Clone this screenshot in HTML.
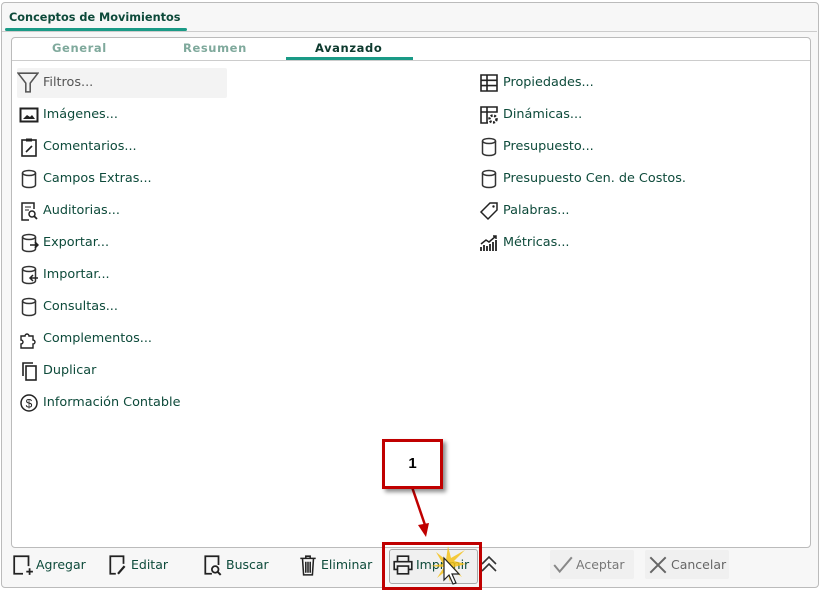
<!DOCTYPE html><html><head><meta charset="utf-8"><style>
body{margin:0;width:820px;height:589px;background:#fff;font-family:"DejaVu Sans","Liberation Sans",sans-serif;position:relative;overflow:hidden}
.outer{position:absolute;left:1px;top:2px;width:816px;height:584px;border:1px solid #bbb;border-radius:4px;background:#f7f7f7}
.title{position:absolute;left:9px;top:11px;font-size:11.3px;font-weight:bold;color:#0d4a3a}
.tline{position:absolute;left:5px;top:28px;width:182px;height:3px;background:#1a9a86;border-radius:2px}
.hline{position:absolute;left:2px;top:31px;width:815px;height:1px;background:#ccc}
.panel{position:absolute;left:11px;top:37px;width:798px;height:509px;border:1px solid #bbb;border-radius:4px;background:#fff}
.tabs{position:absolute;left:12px;top:38px;width:798px;height:22px;border-bottom:1px solid #ccc}
.tab{position:absolute;top:3px;font-size:11.5px;font-weight:bold;letter-spacing:.6px;color:#7fa99c}
.tul{position:absolute;left:286px;top:57px;width:127px;height:3px;background:#1a9a86}
.it{position:absolute;font-size:12.8px;color:#0d4a3a;height:20px;line-height:20px}
.it svg{position:absolute;left:-24px;top:0}
.btn{position:absolute;top:553px;font-size:12.5px;color:#0d4a3a;height:24px;line-height:24px}
.btn svg{position:absolute;left:-24px;top:1px}
</style></head><body>
<div class="outer"></div>
<div class="title">Conceptos de Movimientos</div>
<div class="tline"></div><div class="hline"></div>
<div class="panel"></div>
<div class="tabs"></div>
<div class="tab" style="left:52px;top:41px">General</div>
<div class="tab" style="left:183px;top:41px">Resumen</div>
<div class="tab" style="left:315px;top:41px;color:#0d3a2e">Avanzado</div>
<div class="tul"></div>
<div style="position:absolute;left:17px;top:68px;width:210px;height:30px;background:#f3f3f3;border-radius:2px"></div>
<svg width="0" height="0" style="position:absolute"><defs>
<symbol id="cyl" viewBox="0 0 20 20"><ellipse cx="10" cy="4" rx="6.5" ry="2.5" fill="none" stroke="#333" stroke-width="1.5"/><path d="M3.5 4v12c0 1.4 2.9 2.5 6.5 2.5s6.5-1.1 6.5-2.5V4" fill="none" stroke="#333" stroke-width="1.5"/></symbol>
</defs></svg>
<div class="it" style="left:43px;top:73px;color:#555"><svg width="22" height="22" viewBox="0 0 20 20" style="left:-26px;top:-2px"><path d="M1 2h18l-7 9v8h-4v-8z" fill="none" stroke="#555" stroke-width="1.4"/></svg>Filtros...</div>
<div class="it" style="left:43px;top:105px"><svg width="20" height="20" viewBox="0 0 20 20"><rect x="1.5" y="3.5" width="17" height="13" fill="none" stroke="#222" stroke-width="2"/><path d="M4 14l4-4 3 2 2-2 3 4z" fill="#222"/></svg>Imágenes...</div>
<div class="it" style="left:43px;top:137px"><svg width="20" height="20" viewBox="0 0 20 20"><rect x="3" y="3" width="14" height="16" fill="none" stroke="#222" stroke-width="1.6"/><rect x="7" y="1.5" width="6" height="3" fill="#222"/><path d="M7 15l6-6" stroke="#222" stroke-width="1.6"/></svg>Comentarios...</div>
<div class="it" style="left:43px;top:169px"><svg width="20" height="20"><use href="#cyl"/></svg>Campos Extras...</div>
<div class="it" style="left:43px;top:201px"><svg width="20" height="20" viewBox="0 0 20 20"><path d="M15 8V2H3v17h7" fill="none" stroke="#222" stroke-width="1.5"/><path d="M6 6h6M6 9h4" stroke="#222"/><circle cx="13" cy="13" r="3" fill="none" stroke="#222" stroke-width="1.5"/><path d="M15 15l3 3" stroke="#222" stroke-width="1.8"/></svg>Auditorias...</div>
<div class="it" style="left:43px;top:233px"><svg width="20" height="20"><use href="#cyl"/><path d="M11 12h8M16 9l3 3-3 3" fill="none" stroke="#222" stroke-width="1.5"/></svg>Exportar...</div>
<div class="it" style="left:43px;top:265px"><svg width="20" height="20"><use href="#cyl"/><path d="M19 13h-8M14 10l-3 3 3 3" fill="none" stroke="#222" stroke-width="1.5"/></svg>Importar...</div>
<div class="it" style="left:43px;top:297px"><svg width="20" height="20"><use href="#cyl"/></svg>Consultas...</div>
<div class="it" style="left:43px;top:329px"><svg width="20" height="20" viewBox="0 0 20 20"><path d="M2 7h4a2 2 0 1 1 4 0h4v4a2 2 0 1 1 0 4v4H2v-4a2 2 0 1 0 0-4z" fill="none" stroke="#222" stroke-width="1.4"/></svg>Complementos...</div>
<div class="it" style="left:43px;top:361px"><svg width="20" height="20" viewBox="0 0 20 20"><path d="M4 15V2h10" fill="none" stroke="#222" stroke-width="1.6"/><rect x="7" y="5" width="10" height="14" fill="none" stroke="#222" stroke-width="1.6"/></svg>Duplicar</div>
<div class="it" style="left:43px;top:393px"><svg width="20" height="20" viewBox="0 0 20 20"><circle cx="10" cy="10" r="8" fill="none" stroke="#222" stroke-width="1.5"/><text x="10" y="14.5" font-size="12" text-anchor="middle" fill="#222" font-family="Liberation Sans">$</text></svg>Información Contable</div>
<div class="it" style="left:503px;top:73px"><svg width="20" height="20" viewBox="0 0 20 20"><path d="M2 2h16v16H2zM2 7.3h16M2 12.6h16M8 2v16" fill="none" stroke="#222" stroke-width="1.6"/></svg>Propiedades...</div>
<div class="it" style="left:503px;top:105px"><svg width="20" height="20" viewBox="0 0 20 20"><path d="M2 2h16v5H2zM2 7v11h7M8 2v16" fill="none" stroke="#222" stroke-width="1.6"/><circle cx="14" cy="14" r="3.5" fill="none" stroke="#222" stroke-width="2.5" stroke-dasharray="2 1.5"/></svg>Dinámicas...</div>
<div class="it" style="left:503px;top:137px"><svg width="20" height="20"><use href="#cyl"/></svg>Presupuesto...</div>
<div class="it" style="left:503px;top:169px"><svg width="20" height="20"><use href="#cyl"/></svg>Presupuesto Cen. de Costos.</div>
<div class="it" style="left:503px;top:201px"><svg width="20" height="20" viewBox="0 0 20 20"><path d="M11 2h7v7l-9 9-7-7z" fill="none" stroke="#222" stroke-width="1.5"/><circle cx="14.5" cy="5.5" r="1.2" fill="#222"/></svg>Palabras...</div>
<div class="it" style="left:503px;top:233px"><svg width="20" height="20" viewBox="0 0 20 20"><path d="M2 18v-4M5 18v-6M8 18v-5M11 18v-7M14 18v-9M17 18v-11" stroke="#222" stroke-width="1.8"/><path d="M2 11l5-4 3 2 7-6M14 3h3v3" fill="none" stroke="#222" stroke-width="1.5"/></svg>Métricas...</div>
<div class="btn" style="left:36px"><svg width="22" height="22" viewBox="0 0 20 20" style="left:-24px"><path d="M10 18H2V2h13v9" fill="none" stroke="#222" stroke-width="1.6"/><path d="M16 13v6M13 16h6" stroke="#222" stroke-width="1.6"/></svg>Agregar</div>
<div class="btn" style="left:131px"><svg width="22" height="22" viewBox="0 0 20 20" style="left:-24px"><path d="M8 18H3V2h12v7" fill="none" stroke="#222" stroke-width="1.6"/><path d="M10 18l6-7" stroke="#222" stroke-width="2"/></svg>Editar</div>
<div class="btn" style="left:226px"><svg width="22" height="22" viewBox="0 0 20 20" style="left:-24px"><path d="M9 18H3V2h12v8" fill="none" stroke="#222" stroke-width="1.6"/><circle cx="12" cy="14" r="3" fill="none" stroke="#222" stroke-width="1.6"/><path d="M14 16l3 3" stroke="#222" stroke-width="1.8"/></svg>Buscar</div>
<div class="btn" style="left:321px"><svg width="22" height="22" viewBox="0 0 20 20" style="left:-24px"><path d="M3 4h14M8 4V2h4v2M5 4l1 15h8l1-15M8 7v10M10 7v10M12 7v10" fill="none" stroke="#222" stroke-width="1.4"/></svg>Eliminar</div>
<div style="position:absolute;left:389px;top:549px;width:87px;height:33px;border:1px solid #aaa;border-radius:3px;background:#f0f0f0"></div>
<div class="btn" style="left:416px;top:553px"><svg width="22" height="22" viewBox="0 0 20 20" style="left:-24px"><path d="M5 7V2h10v5M5 14H2V7h16v7h-3M5 11h10v7H5z" fill="none" stroke="#222" stroke-width="1.5"/></svg>Imprimir</div>
<svg style="position:absolute;left:428px;top:544px" width="40" height="45" viewBox="0 0 40 45"><path d="M20 2l3 12 14-8-11 11 12 3-12 3 8 10-11-7-1 12-3-12-10 8 7-11L2 22l13-2-7-12 10 8z" fill="#f4c21a" opacity=".85"/><path d="M16 14v22l5-5 4 9 3-1-4-9h7z" fill="#fff" stroke="#222" stroke-width="1.2"/></svg>
<svg style="position:absolute;left:479px;top:554px" width="20" height="20" viewBox="0 0 20 20"><path d="M3 10l7-7 7 7M3 17l7-7 7 7" fill="none" stroke="#333" stroke-width="1.6"/></svg>
<div style="position:absolute;left:550px;top:550px;width:84px;height:29px;background:#f0f0f0;border-radius:2px"></div>
<div class="btn" style="left:576px;color:#777"><svg width="22" height="22" viewBox="0 0 20 20" style="left:-24px"><path d="M2 10l5 6L18 3" fill="none" stroke="#888" stroke-width="1.8"/></svg>Aceptar</div>
<div style="position:absolute;left:645px;top:550px;width:84px;height:29px;background:#f0f0f0;border-radius:2px"></div>
<div class="btn" style="left:671px;color:#666"><svg width="22" height="22" viewBox="0 0 20 20" style="left:-24px"><path d="M3 3l14 14M17 3L3 17" stroke="#666" stroke-width="1.8"/></svg>Cancelar</div>
<div style="position:absolute;left:382px;top:542px;width:94px;height:42px;border:3px solid #c00000"></div>
<svg style="position:absolute;left:400px;top:485px" width="40" height="60"><path d="M12 2l13 38" stroke="#c00000" stroke-width="2.5"/><path d="M18 40l8 12 3-14z" fill="#c00000"/></svg>
<div style="position:absolute;left:382px;top:439px;width:55px;height:44px;border:3px solid #c00000;background:#fff;box-shadow:3px 3px 4px rgba(0,0,0,.45);font:bold 15px 'Liberation Sans',sans-serif;text-align:center;line-height:44px;color:#000">1</div>
</body></html>
